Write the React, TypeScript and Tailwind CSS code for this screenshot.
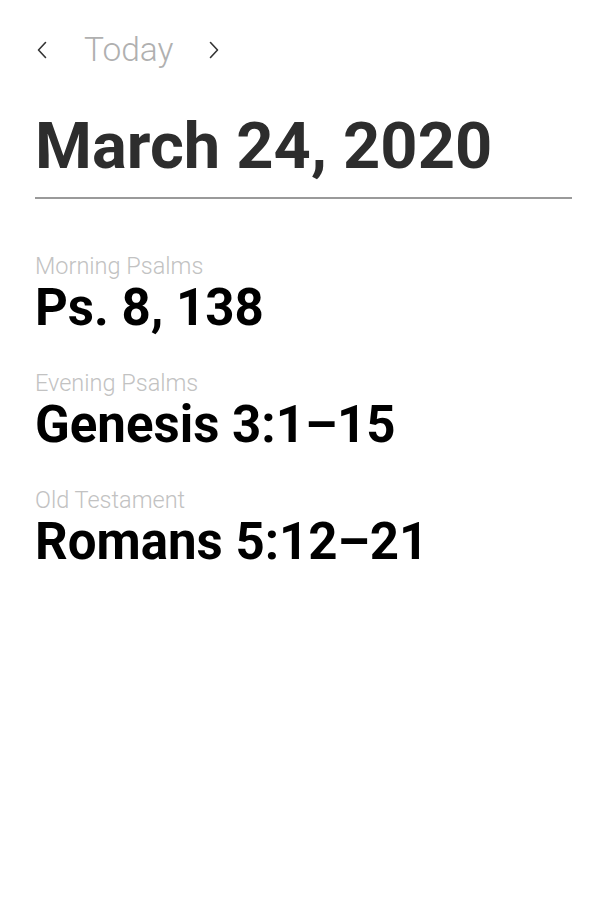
const READINGS = [
  { label: 'Morning Psalms', ref: 'Ps. 8, 138' },
  { label: 'Evening Psalms', ref: 'Genesis 3:1–15' },
  { label: 'Old Testament', ref: 'Romans 5:12–21' },
];

const Chevron = ({ dir }: { dir: 'left' | 'right' }) => (
  <svg width="10" height="18" viewBox="0 0 10 18" fill="none" stroke="#333" strokeWidth={1.6} strokeLinecap="round" strokeLinejoin="round">
    <polyline points={dir === 'left' ? '8.5,1.5 1.5,9 8.5,16.5' : '1.5,1.5 8.5,9 1.5,16.5'} />
  </svg>
);

export default function App() {
  return (
    <div className="min-h-[900px] w-[605px] bg-white px-[35px] font-['Roboto',sans-serif]">
      <div className="flex items-center pt-[34px]">
        <button className="ml-[2px] flex items-center">
          <Chevron dir="left" />
        </button>
        <span className="ml-[37px] text-[33.5px] leading-[32px] font-light text-[#b0b0b0]">Today</span>
        <button className="ml-[36px] flex items-center">
          <Chevron dir="right" />
        </button>
      </div>

      <h1 className="mt-[48px] text-[65px] leading-[64px] font-bold text-[#2d2d2d]">
        March 24, 2020
      </h1>
      <div className="mt-[19px] h-[2px] w-[537px] bg-[#9a9a9a]" />

      <div className="mt-[56px] flex flex-col gap-[39px]">
        {READINGS.map((r) => (
          <div key={r.label} className="flex flex-col gap-[4px]">
            <span className="text-[23.5px] leading-[23px] font-light text-[#c2c2c2]">{r.label}</span>
            <span className="text-[51px] leading-[51px] font-bold text-black">{r.ref}</span>
          </div>
        ))}
      </div>
    </div>
  );
}
